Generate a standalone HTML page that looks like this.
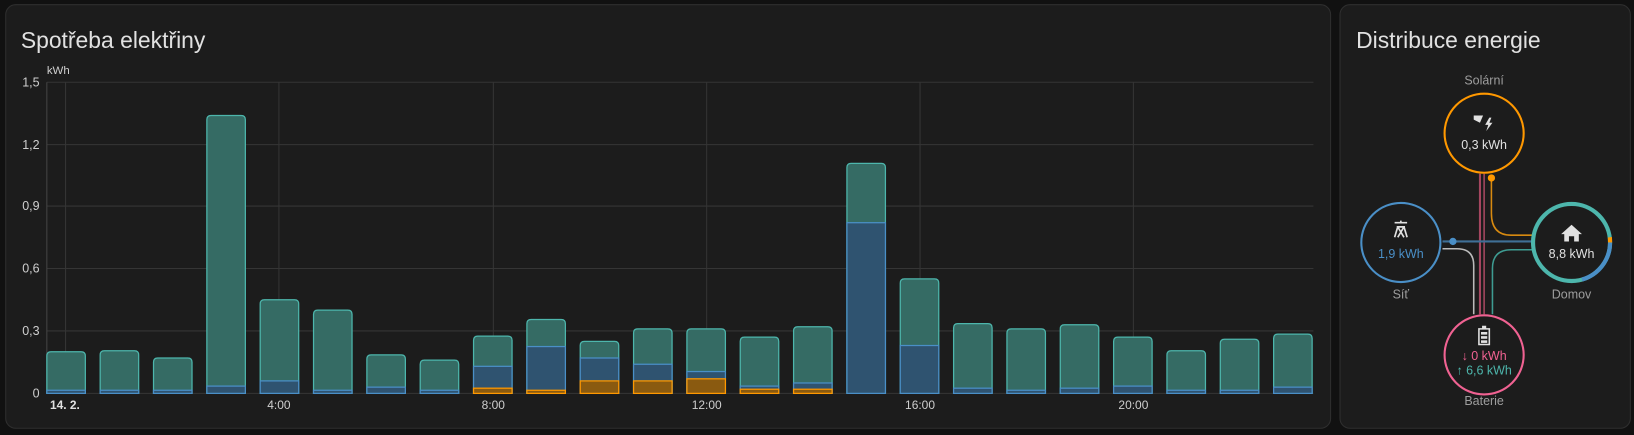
<!DOCTYPE html>
<html><head><meta charset="utf-8"><style>
html,body{margin:0;padding:0;background:#111;width:1634px;height:435px;overflow:hidden;font-family:"Liberation Sans",sans-serif}
#w{position:absolute;left:0;top:0;width:1570px;height:418px;transform:scale(1.04076,1.0407);transform-origin:0 0}
.card{position:absolute;background:#1c1c1c;border:1px solid #2f2f2f;border-radius:10px;box-sizing:border-box}
.t{position:absolute;color:#e1e1e1;font-size:22px}
</style></head><body><div id="w">
<div class="card" style="left:5px;top:4px;width:1274px;height:408px"></div>
<div class="card" style="left:1287px;top:4px;width:280px;height:408px"></div>
<div class="t" style="left:20px;top:26px">Spotřeba elektřiny</div>
<div class="t" style="left:1303px;top:26px">Distribuce energie</div>
<svg id="ch" width="1570" height="418" style="position:absolute;left:0;top:0" font-family="Liberation Sans, sans-serif"></svg>
<svg width="1570" height="418" style="position:absolute;left:0;top:0" font-family="Liberation Sans, sans-serif">
<g fill="none" stroke-width="1.5">
<line x1="1422" y1="167" x2="1422" y2="302" stroke="#a4465f" stroke-width="2"/>
<line x1="1426" y1="167" x2="1426" y2="302" stroke="#a4465f" stroke-width="1.5"/>
<line x1="1386" y1="232" x2="1474" y2="232" stroke="#3f6f96" stroke-width="2"/>
<path d="M1433 171 V205 Q1433 226 1452 226 H1474" stroke="#d88a10"/>
<path d="M1386 239 H1400 Q1416 239 1416 255 V302" stroke="#bbb"/>
<path d="M1474 240 H1452 Q1434 240 1434 258 V302" stroke="#3e9c92"/>
</g>
<circle cx="1433" cy="171" r="3.5" fill="#ff9800"/>
<circle cx="1396" cy="232" r="3.5" fill="#4a8fc7"/>
<circle cx="1426" cy="128" r="38" fill="#1c1c1c" stroke="#ff9800" stroke-width="2"/>
<circle cx="1346" cy="233" r="38" fill="#1c1c1c" stroke="#4a8fc7" stroke-width="2"/>
<circle cx="1426" cy="341" r="38" fill="#1c1c1c" stroke="#f06292" stroke-width="2"/>
<circle cx="1510" cy="233" r="37" fill="#1c1c1c" stroke="#4db6ac" stroke-width="4"/>
<path d="M1547 233 A37 37 0 0 1 1520 268.6" fill="none" stroke="#4a8fc7" stroke-width="4"/>
<path d="M1546.8 228 A37 37 0 0 1 1547 233" fill="none" stroke="#ff9800" stroke-width="4"/>
<g font-size="12" fill="#9e9e9e" text-anchor="middle">
<text x="1426" y="81">Solární</text><text x="1346" y="287">Síť</text><text x="1510" y="287">Domov</text><text x="1426" y="389">Baterie</text>
</g>
<g font-size="12" text-anchor="middle">
<text x="1426" y="143" fill="#e1e1e1">0,3 kWh</text>
<text x="1346" y="248" fill="#4a8fc7">1,9 kWh</text>
<text x="1510" y="248" fill="#e1e1e1">8,8 kWh</text>
<text x="1426" y="346" fill="#f06292">↓ 0 kWh</text>
<text x="1426" y="360" fill="#4db6ac">↑ 6,6 kWh</text>
</g>
<g fill="#e1e1e1">
<path d="M1416 111 l9 0 -3 7 -6 -3z"/>
<path d="M1431 113 l-4 7 h3 l-2 6 6 -8 h-3 l2 -5z"/>
<g stroke="#e1e1e1" stroke-width="1.6" fill="none"><path d="M1340 214 h12 M1342 218 h8 M1346 214 v-2 M1343 218 l-3 10 M1349 218 l3 10 M1343 218 l6 10 M1349 218 l-6 10"/></g>
<path d="M1510 216 l-10 9 h3 v7 h4.5 v-5 h5 v5 h4.5 v-7 h3z"/>
<path d="M1421 316 h10 v15 h-10z" fill="none" stroke="#e1e1e1" stroke-width="1.5"/>
<rect x="1424" y="313" width="4" height="3"/>
<rect x="1423" y="319" width="6" height="2.5"/><rect x="1423" y="323" width="6" height="2.5"/><rect x="1423" y="327" width="6" height="2.5"/>
</g>
</svg>
</div>
<script>
var s='',L=45,R=1262,B=378;
var ys=[79,139,198,258,318,378],lb=['1,5','1,2','0,9','0,6','0,3','0'];
ys.forEach(function(y,i){s+='<line x1="'+L+'" x2="'+R+'" y1="'+y+'" y2="'+y+'" stroke="#353535"/>';
s+='<text x="38" y="'+(y+4)+'" text-anchor="end" font-size="12" fill="#cfcfcf">'+lb[i]+'</text>';});
[63,268,474,679,884,1089].forEach(function(x){s+='<line x1="'+x+'" x2="'+x+'" y1="79" y2="378" stroke="#353535"/>';});
s+='<line x1="'+L+'" x2="'+L+'" y1="79" y2="378" stroke="#444"/>';
s+='<text x="45" y="71" font-size="11" fill="#cfcfcf">kWh</text>';
s+='<text x="48" y="393" font-size="11.5" font-weight="bold" fill="#e1e1e1">14. 2.</text>';
[['4:00',268],['8:00',474],['12:00',679],['16:00',884],['20:00',1089]].forEach(function(a){s+='<text x="'+a[1]+'" y="393" text-anchor="middle" font-size="11.5" fill="#cfcfcf">'+a[0]+'</text>';});
var tp=[338,337,344,111,288,298,341,346,323,307,328,316,316,324,314,157,268,311,316,312,324,337,326,321];
var bl=[375,375,375,371,366,375,372,375,352,333,344,350,357,371,368,214,332,373,375,373,371,375,375,372];
var or={8:373,9:375,10:366,11:366,12:364,13:374,14:374};
for(var i=0;i<24;i++){var x=45+i*51.25,w=37,t=tp[i];
var o=or[i]||B;
s+='<path d="M'+x+' '+B+' V'+(t+4)+' Q'+x+' '+t+' '+(x+4)+' '+t+' H'+(x+w-4)+' Q'+(x+w)+' '+t+' '+(x+w)+' '+(t+4)+' V'+B+'Z" fill="#356b64" stroke="#4db6ac" stroke-width="1.2"/>';
s+='<rect x="'+x+'" y="'+bl[i]+'" width="'+w+'" height="'+(B-bl[i])+'" fill="#2f5370" stroke="#4a8fc7" stroke-width="1.2"/>';
if(o<B)s+='<rect x="'+x+'" y="'+o+'" width="'+w+'" height="'+(B-o)+'" fill="#8a5a10" stroke="#ff9800" stroke-width="1.2"/>';}
document.getElementById('ch').innerHTML=s;
</script>
</body></html>
